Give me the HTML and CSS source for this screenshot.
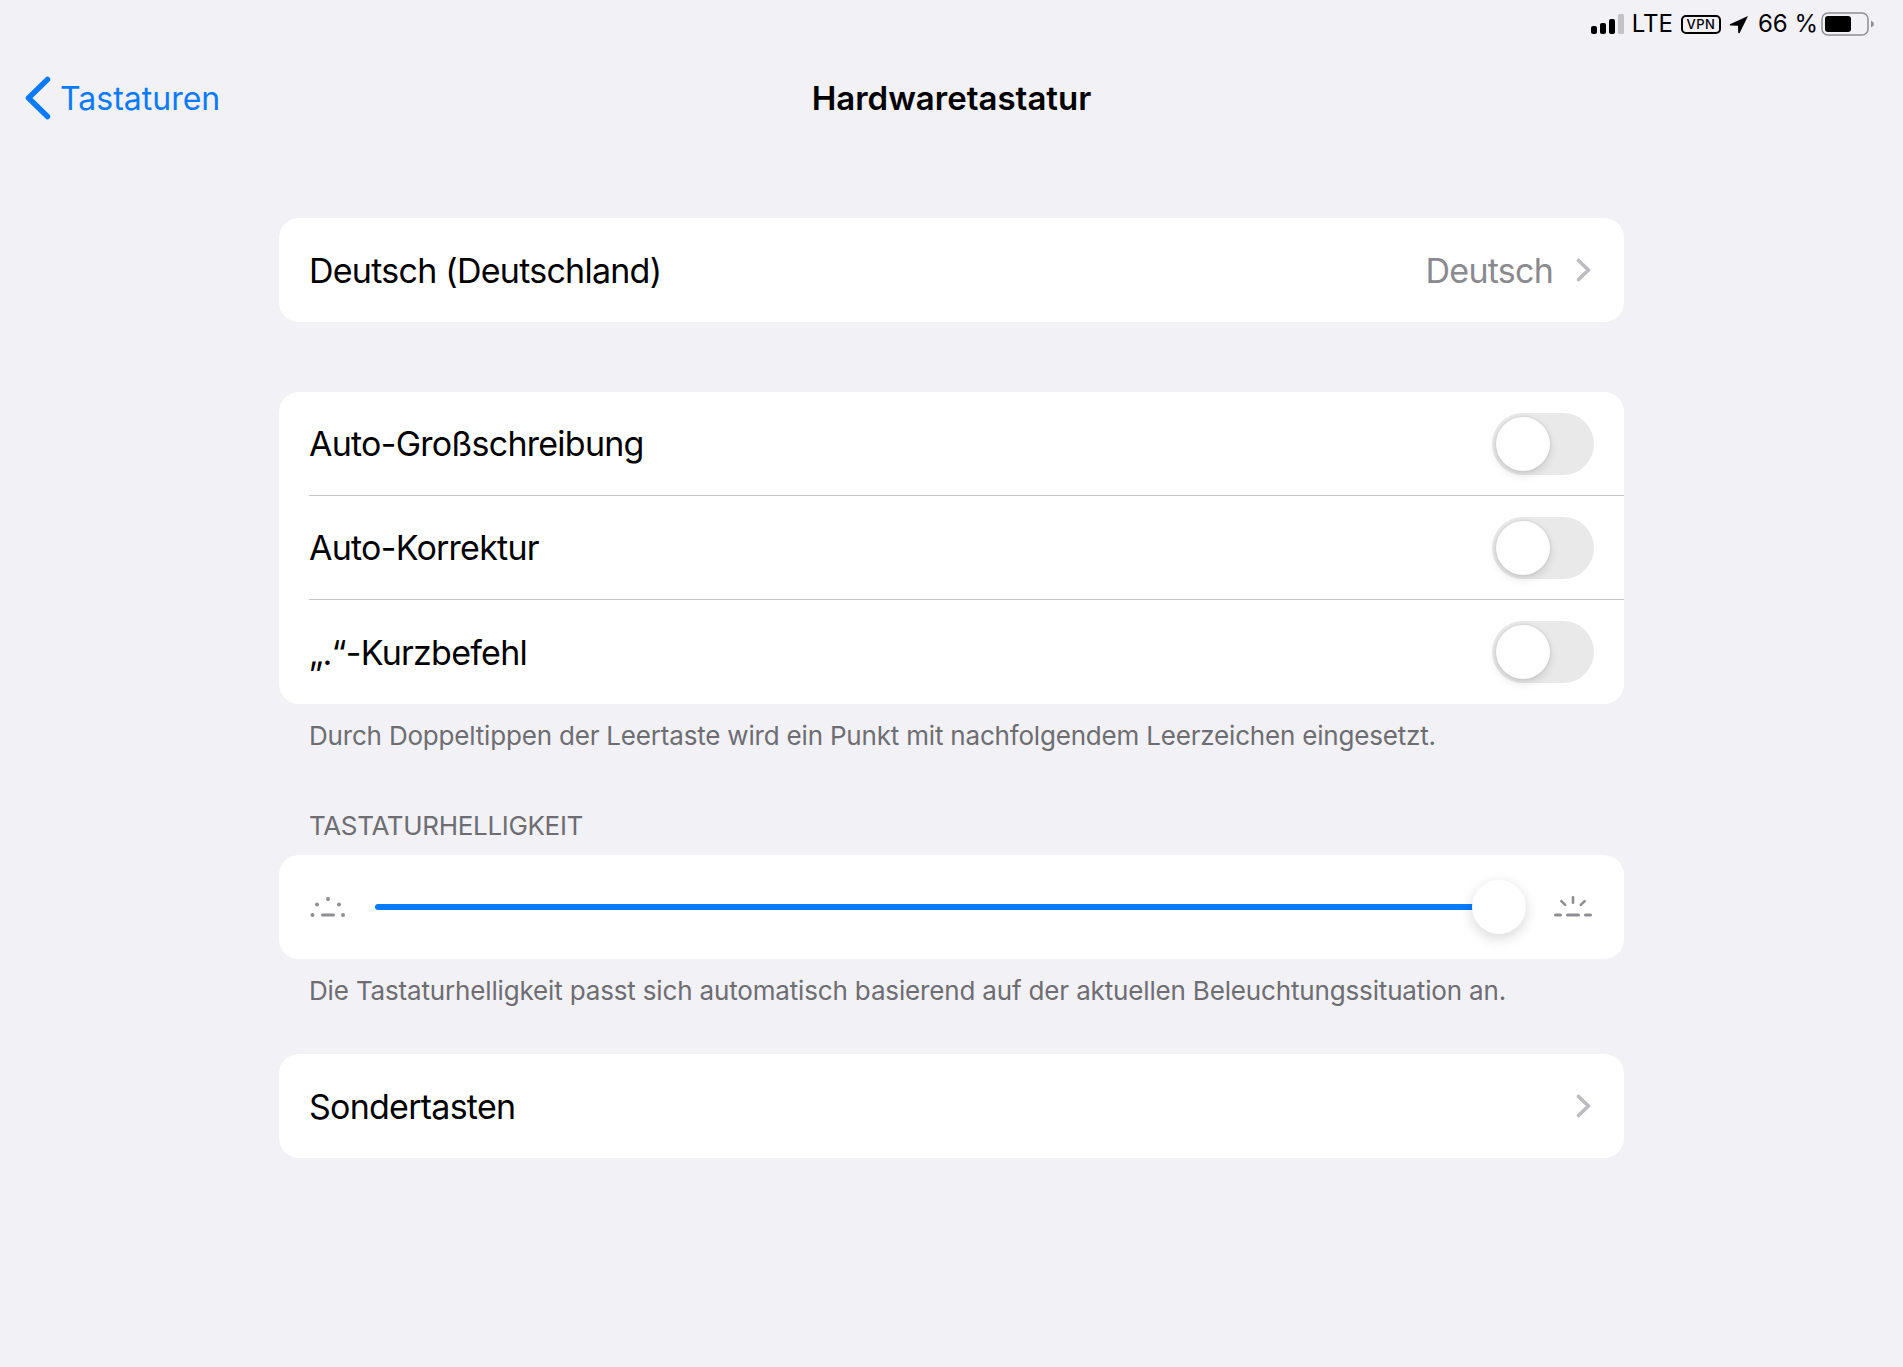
FILE: index.html
```html
<!DOCTYPE html>
<html lang="de">
<head>
  <meta charset="UTF-8">
  <meta name="viewport" content="width=device-width, initial-scale=1.0">
  <title>Hardwaretastatur</title>
  <link rel="stylesheet" href="styles.css">
</head>
<body>
  <div class="status-bar">
    <svg class="signal" width="33" height="20" viewBox="0 0 33 20">
      <rect x="0" y="12" width="6" height="8" rx="2" fill="#000"/>
      <rect x="9" y="9" width="6" height="11" rx="2" fill="#000"/>
      <rect x="18" y="5" width="6" height="15" rx="2" fill="#000"/>
      <rect x="27" y="0" width="6" height="20" rx="1.5" fill="#c4c4c7"/>
    </svg>
    <span class="status-text">LTE</span>
    <span class="vpn">VPN</span>
    <svg class="location" width="20" height="19" viewBox="0 0 20 19">
      <path d="M19 1 L1 9.2 Q0 10.4 1.5 10.6 L9 10.8 L9.2 17.6 Q9.8 19 10.8 17.8 Z" fill="#000"/>
    </svg>
    <span class="status-text">66 %</span>
    <svg class="battery" width="54" height="24" viewBox="0 0 54 24">
      <rect x="1" y="1" width="46" height="22" rx="6" fill="none" stroke="#8e8e93" stroke-width="1.5"/>
      <rect x="4" y="4" width="26" height="16" rx="3" fill="#000"/>
      <path d="M50 8.5 Q53 10 53 12 Q53 14 50 15.5 Z" fill="#8e8e93"/>
    </svg>
  </div>

  <header class="nav-bar">
    <a class="back">
      <svg width="28" height="44" viewBox="0 0 28 44">
        <path d="M23.5 3.5 L4.5 22 L23.5 40.5" fill="none" stroke="#0a7aff" stroke-width="5.5" stroke-linecap="round" stroke-linejoin="round"/>
      </svg>
      <span>Tastaturen</span>
    </a>
    <h1>Hardwaretastatur</h1>
  </header>

  <main class="settings">
    <section class="card">
      <div class="row">
        <span class="row-label">Deutsch (Deutschland)</span>
        <span class="row-value">Deutsch</span>
        <svg class="chevron" width="15" height="24" viewBox="0 0 15 24"><path d="M2.5 2.5 L12.5 12 L2.5 21.5" fill="none" stroke="#bcbcc0" stroke-width="3.6" stroke-linecap="round" stroke-linejoin="round"/></svg>
      </div>
    </section>

    <section class="card group-two">
      <div class="row">
        <span class="row-label">Auto-Großschreibung</span>
        <span class="switch"><span class="knob"></span></span>
      </div>
      <div class="row">
        <span class="row-label">Auto-Korrektur</span>
        <span class="switch"><span class="knob"></span></span>
      </div>
      <div class="row">
        <span class="row-label">„.“-Kurzbefehl</span>
        <span class="switch"><span class="knob"></span></span>
      </div>
    </section>
    <p class="footnote">Durch Doppeltippen der Leertaste wird ein Punkt mit nachfolgendem Leerzeichen eingesetzt.</p>

    <h2 class="section-title">TASTATURHELLIGKEIT</h2>
    <section class="card">
      <div class="row slider-row">
        <svg class="sun" width="38" height="22" viewBox="0 0 38 22" fill="#8e8e93">
          <circle cx="19" cy="3" r="2"/>
          <circle cx="8" cy="8.5" r="2"/>
          <circle cx="30" cy="8.5" r="2"/>
          <circle cx="3.5" cy="19" r="2"/>
          <circle cx="34" cy="19" r="2"/>
          <rect x="12" y="17.5" width="14" height="3" rx="1.5"/>
        </svg>
        <div class="slider">
          <div class="slider-fill"></div>
          <div class="slider-thumb"></div>
        </div>
        <svg class="sun" width="38" height="22" viewBox="0 0 38 22" fill="#8e8e93">
          <rect x="17.7" y="0" width="2.6" height="8" rx="1.3"/>
          <rect x="8" y="3" width="2.6" height="8" rx="1.3" transform="rotate(-45 9.3 7)"/>
          <rect x="27.4" y="3" width="2.6" height="8" rx="1.3" transform="rotate(45 28.7 7)"/>
          <rect x="0" y="17.5" width="8" height="3" rx="1.5"/>
          <rect x="12" y="17.5" width="14" height="3" rx="1.5"/>
          <rect x="30" y="17.5" width="8" height="3" rx="1.5"/>
        </svg>
      </div>
    </section>
    <p class="footnote tight">Die Tastaturhelligkeit passt sich automatisch basierend auf der aktuellen Beleuchtungssituation an.</p>

    <section class="card group-last">
      <div class="row">
        <span class="row-label">Sondertasten</span>
        <svg class="chevron" width="15" height="24" viewBox="0 0 15 24"><path d="M2.5 2.5 L12.5 12 L2.5 21.5" fill="none" stroke="#bcbcc0" stroke-width="3.6" stroke-linecap="round" stroke-linejoin="round"/></svg>
      </div>
    </section>
  </main>
</body>
</html>
```

FILE: styles.css
```css
html, body {
  overflow-x: hidden;
}
body {
  font-family: Inter, "Liberation Sans", sans-serif;
  margin: 0;
  min-height: 1367px;
  background-color: #f1f1f6;
  color: #000;
}
.status-bar {
  display: flex;
  justify-content: flex-end;
  align-items: center;
  height: 48px;
  padding-right: 28px;
  box-sizing: border-box;
}
.status-text {
  font-size: 24px;
  line-height: 48px;
}
.signal {
  margin-right: 8px;
}
.vpn {
  font-size: 13px;
  font-weight: 500;
  line-height: 15px;
  letter-spacing: 0.5px;
  width: 36px;
  text-align: center;
  border: 2px solid #000;
  border-radius: 5px;
  margin-left: 8px;
  margin-right: 8px;
}
.location {
  margin-right: 9px;
}
.battery {
  margin-left: 3px;
}
.nav-bar {
  position: relative;
  height: 100px;
}
.nav-bar h1 {
  margin: 0;
  text-align: center;
  font-size: 33px;
  font-weight: 600;
  line-height: 100px;
}
.back {
  position: absolute;
  left: 24px;
  top: 28px;
  display: flex;
  align-items: flex-start;
  gap: 8px;
  color: #0a7aff;
  font-size: 32px;
  line-height: 44px;
}
.back span {
  margin-top: 1px;
}
.settings {
  width: 1345px;
  margin: 70px auto 0;
}
.card {
  background-color: #fff;
  border-radius: 20px;
  overflow: hidden;
}
.group-two {
  margin-top: 70px;
}
.group-last {
  margin-top: 47px;
}
.row {
  display: flex;
  align-items: center;
  height: 104px;
  margin-left: 30px;
  padding-right: 30px;
  box-sizing: border-box;
  border-bottom: 1px solid #c6c6c8;
}
.row:last-child {
  border-bottom: none;
}
.row-label {
  font-size: 34px;
  letter-spacing: -0.75px;
  flex: 1;
}
.row-value {
  font-size: 34px;
  letter-spacing: -0.75px;
  color: #8a8a8e;
  margin-right: 23px;
}
.chevron {
  display: block;
  margin-right: 3px;
}
.switch {
  display: block;
  width: 102px;
  height: 62px;
  border-radius: 31px;
  background-color: #e9e9ea;
  position: relative;
}
.knob {
  position: absolute;
  left: 4px;
  top: 4px;
  width: 54px;
  height: 54px;
  border-radius: 50%;
  background-color: #fff;
  box-shadow: 0 0 3px rgba(0, 0, 0, 0.12), 0 4px 10px rgba(0, 0, 0, 0.12);
}
.footnote {
  margin: 0;
  padding: 16px 30px 0;
  font-size: 26px;
  line-height: 32px;
  letter-spacing: -0.19px;
  color: #6d6d72;
}
.footnote.tight {
  letter-spacing: -0.16px;
}
.section-title {
  margin: 58px 0 0;
  padding: 0 30px 13px;
  font-size: 26px;
  line-height: 32px;
  font-weight: 400;
  letter-spacing: -0.33px;
  color: #6d6d72;
}
.slider-row {
  gap: 28px;
  padding-right: 32px;
}
.slider {
  flex: 1;
  height: 6px;
  border-radius: 3px;
  background-color: #0a7aff;
  position: relative;
}
.slider-fill {
  height: 100%;
  border-radius: 3px;
}
.slider-thumb {
  position: absolute;
  right: 0;
  top: -24px;
  width: 54px;
  height: 54px;
  border-radius: 50%;
  background-color: #fff;
  box-shadow: 0 4px 14px rgba(0, 0, 0, 0.16);
}
```
